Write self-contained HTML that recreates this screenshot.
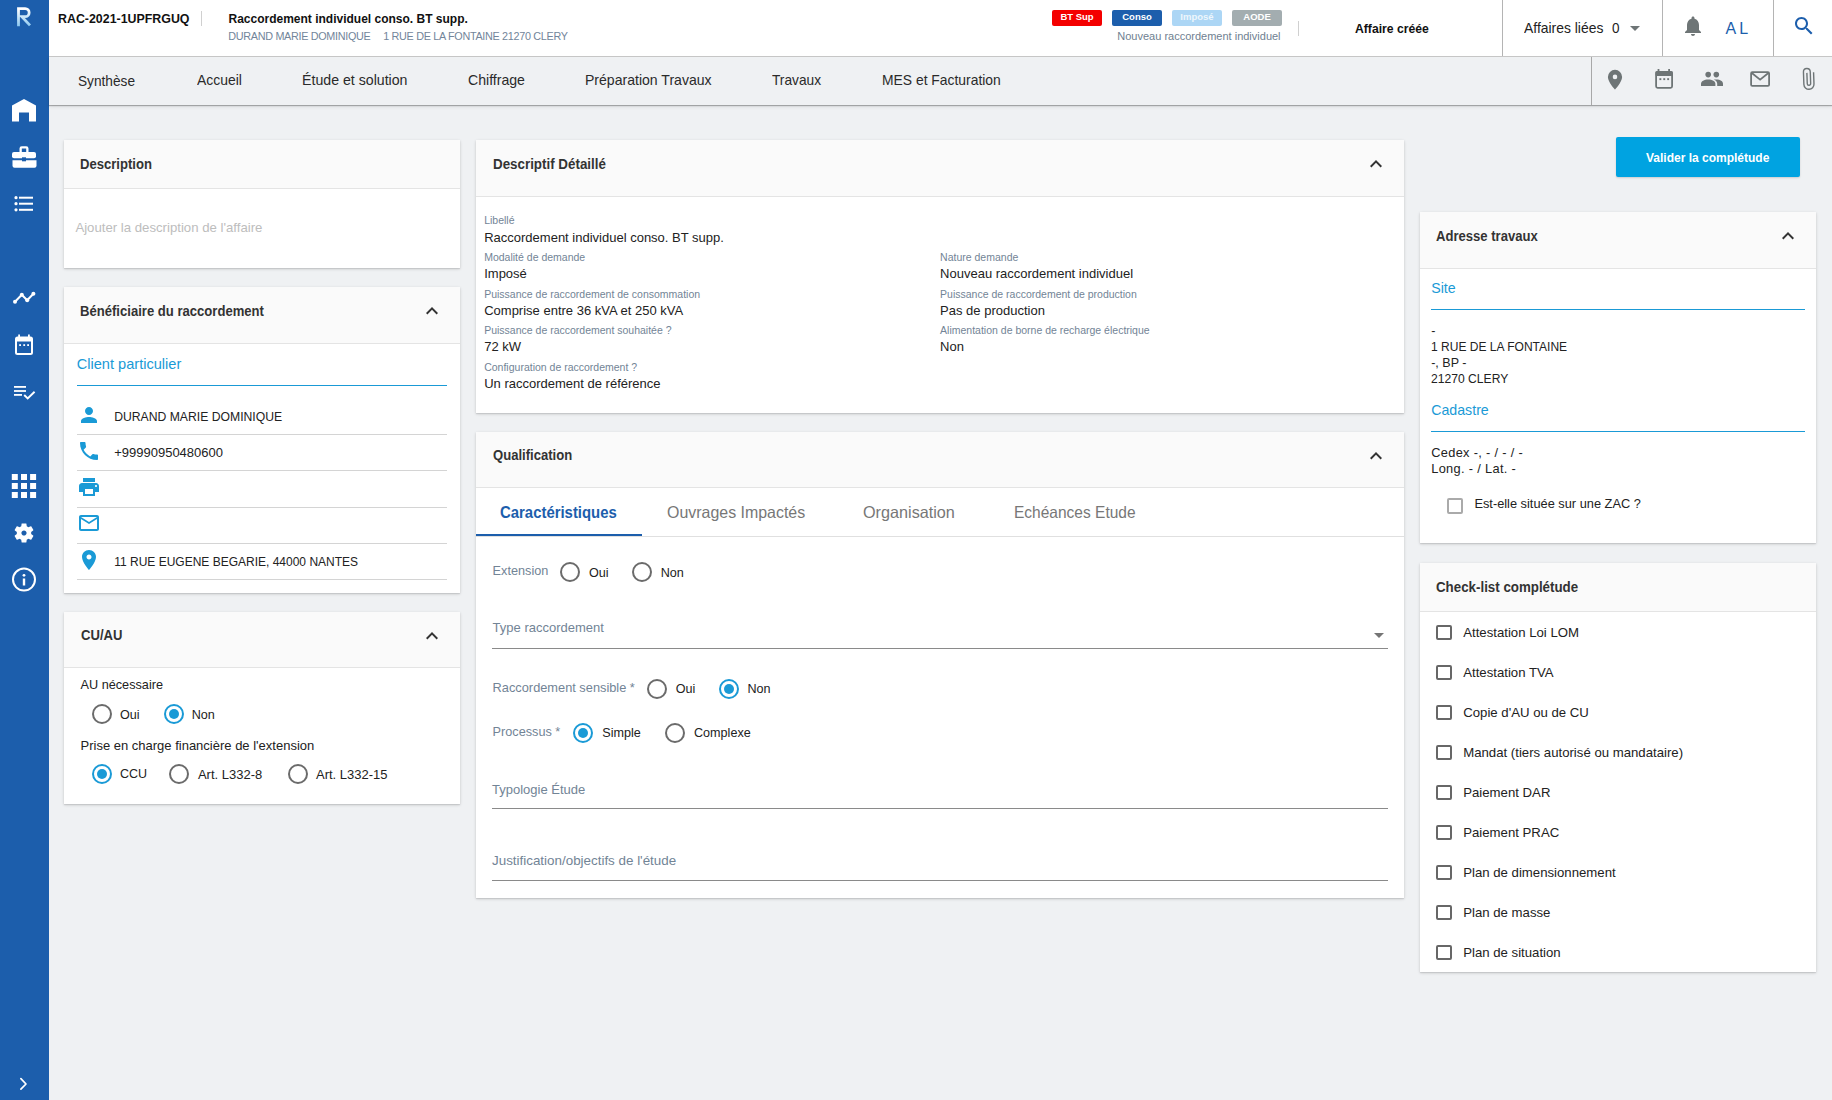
<!DOCTYPE html>
<html><head><meta charset="utf-8">
<style>
html,body{margin:0;padding:0}
body{width:1832px;height:1100px;position:relative;overflow:hidden;background:#eff1f3;font-family:"Liberation Sans",sans-serif;color:#222}
.a{position:absolute}
.t{position:absolute;white-space:nowrap;line-height:1}
.card{position:absolute;background:#fff;box-shadow:0 1px 3px rgba(0,0,0,.16),0 1px 1px rgba(0,0,0,.08)}
.ch{position:absolute;left:0;right:0;top:0;background:#fafafa;border-bottom:1px solid #e4e4e4}
.ct{position:absolute;font-weight:bold;font-size:14.3px;line-height:1;color:#333;white-space:nowrap;transform:scaleX(0.915);transform-origin:0 0}
svg{position:absolute;overflow:visible}
.lb{position:absolute;white-space:nowrap;line-height:1;font-size:10.5px;color:#728496}
.vl{position:absolute;white-space:nowrap;line-height:1;font-size:13px;color:#222}
.rd{position:absolute;width:16px;height:16px;border:2px solid #6b6b6b;border-radius:50%}
.rd.on{border-color:#1a9ad6}
.rd.on::after{content:"";position:absolute;left:3px;top:3px;width:10px;height:10px;border-radius:50%;background:#1a9ad6}
.cb{position:absolute;width:11.6px;height:11.6px;border:2px solid #676767;border-radius:2px}
</style></head><body>

<!-- SIDEBAR -->
<div class="a" style="left:0;top:0;width:49px;height:1100px;background:#1c5eac"></div>
<svg style="left:0;top:0" width="49" height="1100" viewBox="0 0 49 1100">
  <!-- R logo -->
  <defs><linearGradient id="rg" x1="0" y1="0" x2="0" y2="1"><stop offset="0" stop-color="#ffffff"/><stop offset="1" stop-color="#8cc8f0"/></linearGradient></defs>
  <path d="M18.5 26.2V8.7H25.2A3.95 3.95 0 0 1 25.2 16.6H21.8L30 25.4" fill="none" stroke="url(#rg)" stroke-width="2.8" stroke-linejoin="miter"/>
  <!-- home -->
  <path d="M12 105.5L24 99 36 105.5V121.5H29V112.5H19V121.5H12Z" fill="#fff"/>
  <!-- briefcase -->
  <path d="M19.5 152V148.5Q19.5 146.2 21.8 146.2H26.2Q28.5 146.2 28.5 148.5V152H26.2V148.5H21.8V152Z" fill="#fff"/>
  <rect x="12" y="152" width="24" height="6.3" rx="2" fill="#fff"/>
  <path d="M13 160.3H36V165.8Q36 167.8 34 167.8H14Q12 167.8 12 165.8V160.3Z" fill="#fff" transform="translate(0.5 0)"/>
  <rect x="22" y="157.3" width="4" height="4" fill="#1c5eac"/>
  <!-- list -->
  <circle cx="16" cy="197.7" r="1.6" fill="#fff"/><circle cx="16" cy="203.7" r="1.6" fill="#fff"/><circle cx="16" cy="209.8" r="1.6" fill="#fff"/>
  <rect x="19" y="196.7" width="14" height="2" fill="#fff"/><rect x="19" y="202.7" width="14" height="2" fill="#fff"/><rect x="19" y="208.8" width="14" height="2" fill="#fff"/>
  <!-- chart -->
  <polyline points="15,301.8 21.8,294.8 27.2,300.3 33.4,293.8" fill="none" stroke="#fff" stroke-width="2"/>
  <circle cx="15" cy="301.8" r="2" fill="#fff"/><circle cx="21.8" cy="294.8" r="2" fill="#fff"/><circle cx="27.2" cy="300.3" r="2" fill="#fff"/><circle cx="33.4" cy="293.8" r="2" fill="#fff"/>
  <!-- calendar -->
  <rect x="16" y="337.5" width="16" height="16.5" rx="1.5" fill="none" stroke="#fff" stroke-width="2"/>
  <rect x="16" y="337.5" width="16" height="4" fill="#fff"/>
  <rect x="18.2" y="334.5" width="1.8" height="3" fill="#fff"/><rect x="28" y="334.5" width="1.8" height="3" fill="#fff"/>
  <rect x="19.2" y="344.2" width="1.8" height="1.8" fill="#fff"/><rect x="23.3" y="344.2" width="1.8" height="1.8" fill="#fff"/><rect x="27.2" y="344.2" width="1.8" height="1.8" fill="#fff"/>
  <!-- playlist check -->
  <rect x="14" y="386" width="12" height="1.8" fill="#fff"/><rect x="14" y="390.1" width="12" height="1.8" fill="#fff"/><rect x="14" y="394" width="8" height="1.8" fill="#fff"/>
  <polyline points="24.2,395 27.7,398.5 34.6,391.8" fill="none" stroke="#fff" stroke-width="1.9"/>
  <!-- apps -->
  <g fill="#fff">
  <rect x="11.8" y="474" width="6" height="6"/><rect x="21" y="474" width="6" height="6"/><rect x="30.1" y="474" width="6" height="6"/>
  <rect x="11.8" y="483" width="6" height="6"/><rect x="21" y="483" width="6" height="6"/><rect x="30.1" y="483" width="6" height="6"/>
  <rect x="11.8" y="492" width="6" height="6"/><rect x="21" y="492" width="6" height="6"/><rect x="30.1" y="492" width="6" height="6"/>
  </g>
  <!-- settings -->
  <path transform="translate(12 521) scale(1)" fill="#fff" d="M19.14 12.94c.04-.3.06-.61.06-.94 0-.32-.02-.64-.07-.94l2.03-1.58c.18-.14.23-.41.12-.61l-1.920-3.32c-.12-.22-.37-.29-.59-.22l-2.39.96c-.5-.38-1.03-.7-1.62-.94l-.36-2.54c-.04-.24-.24-.41-.48-.41h-3.84c-.24 0-.43.17-.47.41l-.36 2.54c-.59.24-1.13.57-1.62.94l-2.39-.96c-.22-.08-.47 0-.59.22L2.74 8.87c-.12.21-.08.47.12.61l2.03 1.58c-.05.3-.09.63-.09.94s.02.64.07.94l-2.030 1.58c-.18.14-.23.41-.12.61l1.92 3.32c.12.22.37.29.59.22l2.39-.96c.5.38 1.03.7 1.62.94l.36 2.54c.05.24.24.41.48.41h3.84c.24 0 .44-.17.47-.41l.36-2.54c.59-.24 1.13-.56 1.62-.94l2.39.96c.22.08.47 0 .59-.22l1.92-3.32c.12-.22.07-.47-.12-.61l-2.01-1.58zM12 14.6c-1.43 0-2.6-1.17-2.6-2.6s1.17-2.6 2.6-2.6 2.6 1.17 2.6 2.6-1.17 2.6-2.6 2.6z"/>
  <!-- info -->
  <circle cx="24" cy="579.6" r="11" fill="none" stroke="#fff" stroke-width="2"/>
  <circle cx="24" cy="575.3" r="1.4" fill="#fff"/>
  <rect x="22.8" y="578.5" width="2.4" height="7" fill="#fff"/>
  <!-- chevron -->
  <path d="M20.9 1078.7L26 1084 20.9 1089.1" fill="none" stroke="#fff" stroke-width="1.7" stroke-linecap="round" stroke-linejoin="round"/>
</svg>

<!-- HEADER -->
<div class="a" style="left:49px;top:0;width:1783px;height:56px;background:#fff;border-bottom:1px solid #c8c8c8"></div>
<div class="t" style="left:58px;top:12.5px;font-size:12.4px;font-weight:bold;color:#111">RAC-2021-1UPFRGUQ</div>
<div class="a" style="left:201px;top:11px;width:1px;height:15px;background:#d0d0d0"></div>
<div class="t" style="left:228.5px;top:12.8px;font-size:12px;font-weight:bold;color:#111">Raccordement individuel conso. BT supp.</div>
<div class="t" style="left:228.3px;top:31px;font-size:10.8px;letter-spacing:-0.3px;color:#72859a">DURAND MARIE DOMINIQUE</div>
<div class="t" style="left:383.2px;top:31px;font-size:10.8px;letter-spacing:-0.3px;color:#72859a">1 RUE DE LA FONTAINE 21270 CLERY</div>

<div class="a" style="left:1052px;top:10px;width:50px;height:16px;background:#f40000;border-radius:2px"></div>
<div class="a" style="left:1112px;top:10px;width:50px;height:16px;background:#1c5eac;border-radius:2px"></div>
<div class="a" style="left:1172px;top:10px;width:50px;height:16px;background:#acd6f5;border-radius:2px"></div>
<div class="a" style="left:1232px;top:10px;width:50px;height:16px;background:#a3adb0;border-radius:2px"></div>
<div class="t" style="left:1052px;top:11.8px;width:50px;text-align:center;font-size:9.5px;font-weight:bold;color:#fff">BT Sup</div>
<div class="t" style="left:1112px;top:11.8px;width:50px;text-align:center;font-size:9.5px;font-weight:bold;color:#fff">Conso</div>
<div class="t" style="left:1172px;top:11.8px;width:50px;text-align:center;font-size:9.5px;font-weight:bold;color:#eef6fc">Imposé</div>
<div class="t" style="left:1232px;top:11.8px;width:50px;text-align:center;font-size:9.5px;font-weight:bold;color:#fff">AODE</div>
<div class="t" style="left:1117.3px;top:30.8px;font-size:11px;color:#6f8191">Nouveau raccordement individuel</div>
<div class="a" style="left:1298px;top:21px;width:1px;height:15px;background:#d0d0d0"></div>

<div class="t" style="left:1355px;top:22.5px;font-size:12.2px;font-weight:bold;color:#111">Affaire créée</div>
<div class="a" style="left:1502px;top:0;width:1px;height:56px;background:#b4b4b4"></div>
<div class="t" style="left:1523.5px;top:20px;font-size:15px;color:#222;transform:scaleX(0.927);transform-origin:0 0">Affaires liées</div>
<div class="t" style="left:1612px;top:20px;font-size:15px;color:#222;transform:scaleX(0.9);transform-origin:0 0">0</div>
<svg style="left:1630px;top:26px" width="10" height="5"><path d="M0 0H10L5 5Z" fill="#6e7576"/></svg>
<div class="a" style="left:1662px;top:0;width:1px;height:56px;background:#b4b4b4"></div>
<svg style="left:1681px;top:13.7px" width="24" height="24" viewBox="0 0 24 24"><path fill="#6e7576" d="M12 22c1.1 0 2-.9 2-2h-4c0 1.1.89 2 2 2zm6-6v-5c0-3.07-1.64-5.64-4.5-6.32V4c0-.83-.67-1.5-1.5-1.5s-1.5.67-1.5 1.5v.68C7.63 5.36 6 7.92 6 11v5l-2 2v1h16v-1l-2-2z"/></svg>
<div class="t" style="left:1725.5px;top:21px;font-size:16px;color:#1c5eac;letter-spacing:3px">AL</div>
<div class="a" style="left:1773px;top:0;width:1px;height:56px;background:#b4b4b4"></div>
<svg style="left:1792px;top:13.8px" width="24" height="24" viewBox="0 0 24 24"><path fill="#1c5eac" d="M15.5 14h-.79l-.28-.27C15.41 12.59 16 11.11 16 9.5 16 5.91 13.090 3 9.5 3S3 5.91 3 9.5 5.91 16 9.5 16c1.61 0 3.09-.59 4.23-1.57l.27.28v.79l5 4.99L20.49 19l-4.99-5zm-6 0C7.01 14 5 11.99 5 9.5S7.01 5 9.5 5 14 7.01 14 9.5 11.99 14 9.5 14z"/></svg>

<!-- NAV -->
<div class="a" style="left:49px;top:57px;width:1783px;height:48px;background:#eff1f3;box-shadow:0 1px 1px rgba(0,0,0,.28),0 2px 4px rgba(0,0,0,.08)"></div>
<div class="t" style="left:78.3px;top:73.2px;font-size:15px;color:#2a2a2a;transform:scaleX(0.911);transform-origin:0 0">Synthèse</div>
<div class="t" style="left:196.5px;top:72.3px;font-size:15px;color:#2a2a2a;transform:scaleX(0.93);transform-origin:0 0">Accueil</div>
<div class="t" style="left:302px;top:72.3px;font-size:15px;color:#2a2a2a;transform:scaleX(0.944);transform-origin:0 0">Étude et solution</div>
<div class="t" style="left:467.7px;top:72.3px;font-size:15px;color:#2a2a2a;transform:scaleX(0.94);transform-origin:0 0">Chiffrage</div>
<div class="t" style="left:585.1px;top:72.3px;font-size:15px;color:#2a2a2a;transform:scaleX(0.937);transform-origin:0 0">Préparation Travaux</div>
<div class="t" style="left:772.4px;top:72.3px;font-size:15px;color:#2a2a2a;transform:scaleX(0.914);transform-origin:0 0">Travaux</div>
<div class="t" style="left:882.3px;top:72.3px;font-size:15px;color:#2a2a2a;transform:scaleX(0.925);transform-origin:0 0">MES et Facturation</div>
<div class="a" style="left:1591px;top:57px;width:1px;height:48px;background:#a8a8a8"></div>
<svg style="left:1595px;top:60px" width="237" height="40" viewBox="0 0 237 40">
  <path d="M20 29.5C20 29.5 12.9 21.8 12.9 16.9A7.1 7.1 0 0 1 27.1 16.9C27.1 21.8 20 29.5 20 29.5ZM20 14.6A2.3 2.3 0 1 0 20 19.2A2.3 2.3 0 1 0 20 14.6Z" fill="#6e7576" fill-rule="evenodd"/>
  <rect x="61.1" y="11.9" width="16" height="15.9" rx="1.5" fill="none" stroke="#6e7576" stroke-width="1.8"/>
  <rect x="60.5" y="11.2" width="17.2" height="4.9" rx="1" fill="#6e7576"/>
  <rect x="62.6" y="9" width="1.8" height="3" fill="#6e7576"/><rect x="73.2" y="9" width="1.8" height="3" fill="#6e7576"/>
  <rect x="64.4" y="18.2" width="1.9" height="1.9" fill="#6e7576"/><rect x="68.3" y="18.2" width="1.9" height="1.9" fill="#6e7576"/><rect x="72.2" y="18.2" width="1.9" height="1.9" fill="#6e7576"/>
  <circle cx="113.2" cy="14.6" r="2.8" fill="#6e7576"/><circle cx="121.3" cy="14.6" r="2.8" fill="#6e7576"/>
  <path d="M106 25.9V23.8C106 21 109.2 19.4 113.2 19.4S120.4 21 120.4 23.8V25.9Z" fill="#6e7576"/>
  <path d="M118.6 19.6C119.4 19.45 120.3 19.4 121.3 19.4C125.3 19.4 128 21 128 23.8V25.9H122.2V23.8C122.2 22 121 20.6 118.6 19.6Z" fill="#6e7576"/>
  <rect x="156.1" y="12.2" width="18" height="13.7" rx="1.2" fill="none" stroke="#6e7576" stroke-width="1.8"/>
  <path d="M156.5 12.8L165.1 19.6L173.7 12.8" fill="none" stroke="#6e7576" stroke-width="1.8"/>
  <path d="M217.6 12.5V24.2A5.05 5.05 0 0 1 207.5 24.2V11.8A3.4 3.4 0 0 1 214.3 11.8V23.6A1.7 1.7 0 0 1 210.9 23.6V12.8" fill="none" stroke="#6e7576" stroke-width="1.4" transform="translate(1.2 0) rotate(-2 213 19)"/>
</svg>


<!-- LEFT COLUMN -->
<div class="card" style="left:64px;top:140px;width:396px;height:128px"><div class="ch" style="height:48px"></div></div>
<div class="ct" style="left:80px;top:157.2px">Description</div>
<div class="t" style="left:75.4px;top:220.8px;font-size:13.2px;color:#bdbdbd">Ajouter la description de l'affaire</div>

<div class="card" style="left:64px;top:287px;width:396px;height:306px"><div class="ch" style="height:56px"></div></div>
<div class="ct" style="left:79.8px;top:303.8px">Bénéficiaire du raccordement</div>
<svg style="left:420px;top:299px" width="24" height="24" viewBox="0 0 24 24"><path fill="#333" d="M12 8l-6 6 1.41 1.41L12 10.83l4.59 4.58L18 14z"/></svg>
<div class="t" style="left:76.7px;top:357px;font-size:14.6px;color:#1a9ad6">Client particulier</div>
<div class="a" style="left:77px;top:385px;width:370px;height:1px;background:#1a9ad6"></div>
<svg style="left:77px;top:403px" width="24" height="24" viewBox="0 0 24 24"><path fill="#1a9ad6" d="M12 12c2.21 0 4-1.79 4-4s-1.79-4-4-4-4 1.79-4 4 1.79 4 4 4zm0 2c-2.67 0-8 1.34-8 4v2h16v-2c0-2.66-5.330-4-8-4z"/></svg>
<div class="t" style="left:114.2px;top:411px;font-size:12.2px;color:#222">DURAND MARIE DOMINIQUE</div>
<div class="a" style="left:77px;top:434px;width:370px;height:1px;background:#d4d4d4"></div>
<svg style="left:77px;top:439px" width="24" height="24" viewBox="0 0 24 24"><path fill="#1a9ad6" d="M6.62 10.79c1.44 2.83 3.76 5.14 6.59 6.59l2.2-2.2c.27-.27.67-.36 1.02-.24 1.12.37 2.33.57 3.57.57.55 0 1 .45 1 1V20c0 .55-.45 1-1 1-9.39 0-17-7.61-17-17 0-.55.45-1 1-1h3.5c.55 0 1 .45 1 1 0 1.25.2 2.45.57 3.57.11.35.03.74-.25 1.02l-2.2 2.2z"/></svg>
<div class="t" style="left:114.2px;top:446.2px;font-size:13px;color:#222">+99990950480600</div>
<div class="a" style="left:77px;top:470px;width:370px;height:1px;background:#d4d4d4"></div>
<svg style="left:77px;top:475px" width="24" height="24" viewBox="0 0 24 24"><path fill="#1a9ad6" d="M19 8H5c-1.66 0-3 1.34-3 3v6h4v4h12v-4h4v-6c0-1.66-1.34-3-3-3zm-3 11H8v-5h8v5zm3-7c-.55 0-1-.45-1-1s.45-1 1-1 1 .45 1 1-.45 1-1 1zm-1-9H6v4h12V3z"/></svg>
<div class="a" style="left:77px;top:507px;width:370px;height:1px;background:#d4d4d4"></div>
<svg style="left:77px;top:511px" width="24" height="24" viewBox="0 0 24 24"><path fill="#1a9ad6" d="M20 4H4c-1.1 0-1.99.9-1.99 2L2 18c0 1.1.9 2 2 2h16c1.1 0 2-.9 2-2V6c0-1.1-.9-2-2-2zm0 14H4V8l8 5 8-5v10zm-8-7L4 6h16l-8 5z"/></svg>
<div class="a" style="left:77px;top:543px;width:370px;height:1px;background:#d4d4d4"></div>
<svg style="left:77px;top:548px" width="24" height="24" viewBox="0 0 24 24"><path fill="#1a9ad6" d="M12 2C8.13 2 5 5.13 5 9c0 5.25 7 13 7 13s7-7.75 7-13c0-3.87-3.13-7-7-7zm0 9.5c-1.38 0-2.5-1.12-2.5-2.5s1.12-2.5 2.5-2.5 2.5 1.12 2.5 2.5-1.12 2.5-2.5 2.5z"/></svg>
<div class="t" style="left:114.2px;top:556.3px;font-size:12px;color:#222">11 RUE EUGENE BEGARIE, 44000 NANTES</div>
<div class="a" style="left:77px;top:579px;width:370px;height:1px;background:#d4d4d4"></div>

<div class="card" style="left:64px;top:612px;width:396px;height:192px"><div class="ch" style="height:55px"></div></div>
<div class="ct" style="left:80.5px;top:627.5px">CU/AU</div>
<svg style="left:420px;top:624px" width="24" height="24" viewBox="0 0 24 24"><path fill="#333" d="M12 8l-6 6 1.41 1.41L12 10.83l4.59 4.58L18 14z"/></svg>
<div class="t" style="left:80.5px;top:678.6px;font-size:12.7px;color:#222">AU nécessaire</div>
<div class="rd" style="left:91.8px;top:704px"></div>
<div class="t" style="left:119.9px;top:708.5px;font-size:12.6px;color:#222">Oui</div>
<div class="rd on" style="left:163.8px;top:704px"></div>
<div class="t" style="left:191.7px;top:708.5px;font-size:12.6px;color:#222">Non</div>
<div class="t" style="left:80.5px;top:738.5px;font-size:13px;color:#222">Prise en charge financière de l'extension</div>
<div class="rd on" style="left:91.8px;top:764px"></div>
<div class="t" style="left:119.9px;top:768.3px;font-size:12.5px;color:#222">CCU</div>
<div class="rd" style="left:168.8px;top:764px"></div>
<div class="t" style="left:197.9px;top:767.8px;font-size:13px;color:#222">Art. L332-8</div>
<div class="rd" style="left:287.8px;top:764px"></div>
<div class="t" style="left:316px;top:767.8px;font-size:13px;color:#222">Art. L332-15</div>

<!-- CENTER COLUMN -->
<div class="card" style="left:476px;top:140px;width:928px;height:273px"><div class="ch" style="height:56px"></div></div>
<div class="ct" style="left:492.8px;top:156.9px;transform:scaleX(0.935)">Descriptif Détaillé</div>
<svg style="left:1364px;top:152px" width="24" height="24" viewBox="0 0 24 24"><path fill="#333" d="M12 8l-6 6 1.41 1.41L12 10.83l4.59 4.58L18 14z"/></svg>
<div class="lb" style="left:484.2px;top:215.2px">Libellé</div>
<div class="vl" style="left:484.2px;top:230.8px">Raccordement individuel conso. BT supp.</div>
<div class="lb" style="left:484.2px;top:252.3px">Modalité de demande</div>
<div class="vl" style="left:484.2px;top:267.1px">Imposé</div>
<div class="lb" style="left:484.2px;top:289px">Puissance de raccordement de consommation</div>
<div class="vl" style="left:484.2px;top:304.3px">Comprise entre 36 kVA et 250 kVA</div>
<div class="lb" style="left:484.2px;top:324.8px">Puissance de raccordement souhaitée ?</div>
<div class="vl" style="left:484.2px;top:339.9px">72 kW</div>
<div class="lb" style="left:484.2px;top:362px">Configuration de raccordement ?</div>
<div class="vl" style="left:484.2px;top:376.8px">Un raccordement de référence</div>
<div class="lb" style="left:940.1px;top:252.3px">Nature demande</div>
<div class="vl" style="left:940.1px;top:267.1px">Nouveau raccordement individuel</div>
<div class="lb" style="left:940.1px;top:289px">Puissance de raccordement de production</div>
<div class="vl" style="left:940.1px;top:304.3px">Pas de production</div>
<div class="lb" style="left:940.1px;top:324.8px">Alimentation de borne de recharge électrique</div>
<div class="vl" style="left:940.1px;top:339.9px">Non</div>

<div class="card" style="left:476px;top:432px;width:928px;height:466px"><div class="ch" style="height:55px"></div></div>
<div class="ct" style="left:492.6px;top:447.6px">Qualification</div>
<svg style="left:1364px;top:444px" width="24" height="24" viewBox="0 0 24 24"><path fill="#333" d="M12 8l-6 6 1.41 1.41L12 10.83l4.59 4.58L18 14z"/></svg>
<div class="a" style="left:476px;top:535.5px;width:928px;height:1px;background:#e0e0e0"></div>
<div class="a" style="left:476px;top:534px;width:166px;height:2px;background:#1c5eac"></div>
<div class="t" style="left:500.3px;top:503.8px;font-size:16.5px;font-weight:bold;color:#1c5eac;transform:scaleX(0.903);transform-origin:0 0">Caractéristiques</div>
<div class="t" style="left:666.5px;top:503.8px;font-size:16.5px;color:#777;transform:scaleX(0.966);transform-origin:0 0">Ouvrages Impactés</div>
<div class="t" style="left:863.3px;top:503.8px;font-size:16.5px;color:#777;transform:scaleX(0.982);transform-origin:0 0">Organisation</div>
<div class="t" style="left:1013.5px;top:503.8px;font-size:16.5px;color:#777;transform:scaleX(0.94);transform-origin:0 0">Echéances Etude</div>

<div class="t" style="left:492.6px;top:564.6px;font-size:12.7px;color:#728496">Extension</div>
<div class="rd" style="left:559.8px;top:562px"></div>
<div class="t" style="left:589px;top:567.2px;font-size:12.6px;color:#222">Oui</div>
<div class="rd" style="left:631.8px;top:562px"></div>
<div class="t" style="left:660.7px;top:567.2px;font-size:12.6px;color:#222">Non</div>

<div class="t" style="left:492.6px;top:621.3px;font-size:13px;color:#728496">Type raccordement</div>
<svg style="left:1374px;top:632.5px" width="10" height="5"><path d="M0 0H10L5 5Z" fill="#757575"/></svg>
<div class="a" style="left:492px;top:647.5px;width:896px;height:1px;background:#8a8a8a"></div>

<div class="t" style="left:492.6px;top:681.8px;font-size:12.8px;color:#728496">Raccordement sensible *</div>
<div class="rd" style="left:646.6px;top:679px"></div>
<div class="t" style="left:675.8px;top:683px;font-size:12.6px;color:#222">Oui</div>
<div class="rd on" style="left:719px;top:679px"></div>
<div class="t" style="left:747.5px;top:683px;font-size:12.6px;color:#222">Non</div>

<div class="t" style="left:492.6px;top:725.9px;font-size:12.7px;color:#728496">Processus *</div>
<div class="rd on" style="left:572.8px;top:722.8px"></div>
<div class="t" style="left:602.3px;top:727px;font-size:12.6px;color:#222">Simple</div>
<div class="rd" style="left:664.6px;top:722.8px"></div>
<div class="t" style="left:694px;top:727px;font-size:12.6px;color:#222">Complexe</div>

<div class="t" style="left:492px;top:782.9px;font-size:13px;color:#728496">Typologie Étude</div>
<div class="a" style="left:492px;top:808px;width:896px;height:1px;background:#8a8a8a"></div>
<div class="t" style="left:492px;top:853.9px;font-size:13.4px;color:#728496">Justification/objectifs de l'étude</div>
<div class="a" style="left:492px;top:880px;width:896px;height:1px;background:#8a8a8a"></div>

<!-- RIGHT COLUMN -->
<div class="a" style="left:1616px;top:137px;width:184px;height:40px;background:#00a3e1;border-radius:2px;box-shadow:0 1px 2px rgba(0,0,0,.15)"></div>
<div class="t" style="left:1646px;top:151.8px;font-size:12px;font-weight:bold;color:#fff">Valider la complétude</div>

<div class="card" style="left:1420px;top:212px;width:396px;height:331px"><div class="ch" style="height:56px"></div></div>
<div class="ct" style="left:1436px;top:228.6px">Adresse travaux</div>
<svg style="left:1776px;top:224px" width="24" height="24" viewBox="0 0 24 24"><path fill="#333" d="M12 8l-6 6 1.41 1.41L12 10.83l4.59 4.58L18 14z"/></svg>
<div class="t" style="left:1431.2px;top:280.7px;font-size:14.2px;color:#1a9ad6">Site</div>
<div class="a" style="left:1431px;top:309px;width:374px;height:1px;background:#1a9ad6"></div>
<div class="t" style="left:1431.2px;top:324.6px;font-size:12.5px;color:#222">-</div>
<div class="t" style="left:1431.2px;top:340.6px;font-size:12.5px;color:#222;transform:scaleX(0.962);transform-origin:0 0">1 RUE DE LA FONTAINE</div>
<div class="t" style="left:1431.2px;top:356.6px;font-size:12.5px;color:#222">-, BP -</div>
<div class="t" style="left:1431.2px;top:372.6px;font-size:12.5px;color:#222;transform:scaleX(0.97);transform-origin:0 0">21270 CLERY</div>
<div class="t" style="left:1431.2px;top:403.1px;font-size:14.2px;color:#1a9ad6">Cadastre</div>
<div class="a" style="left:1431px;top:431px;width:374px;height:1px;background:#1a9ad6"></div>
<div class="t" style="left:1431.2px;top:447px;font-size:12.8px;color:#222;letter-spacing:0.33px">Cedex -, - / - / -</div>
<div class="t" style="left:1431.2px;top:463px;font-size:12.8px;color:#222;letter-spacing:0.33px">Long. - / Lat. -</div>
<div class="cb" style="left:1447px;top:498px;border-color:#aaa"></div>
<div class="t" style="left:1474.4px;top:497.9px;font-size:12.8px;color:#222">Est-elle située sur une ZAC ?</div>

<div class="card" style="left:1420px;top:563px;width:396px;height:409px"><div class="ch" style="height:48px"></div></div>
<div class="ct" style="left:1436px;top:580.2px;transform:scaleX(0.932)">Check-list complétude</div>
<div class="cb" style="left:1436px;top:624.8px"></div>
<div class="t" style="left:1463.2px;top:626px;font-size:13.2px;color:#222">Attestation Loi LOM</div>
<div class="cb" style="left:1436px;top:664.8px"></div>
<div class="t" style="left:1463.2px;top:666px;font-size:13.2px;color:#222">Attestation TVA</div>
<div class="cb" style="left:1436px;top:704.8px"></div>
<div class="t" style="left:1463.2px;top:706px;font-size:13.2px;color:#222">Copie d'AU ou de CU</div>
<div class="cb" style="left:1436px;top:744.8px"></div>
<div class="t" style="left:1463.2px;top:746px;font-size:13.2px;color:#222">Mandat (tiers autorisé ou mandataire)</div>
<div class="cb" style="left:1436px;top:784.8px"></div>
<div class="t" style="left:1463.2px;top:786px;font-size:13.2px;color:#222">Paiement DAR</div>
<div class="cb" style="left:1436px;top:824.8px"></div>
<div class="t" style="left:1463.2px;top:826px;font-size:13.2px;color:#222">Paiement PRAC</div>
<div class="cb" style="left:1436px;top:864.8px"></div>
<div class="t" style="left:1463.2px;top:866px;font-size:13.2px;color:#222">Plan de dimensionnement</div>
<div class="cb" style="left:1436px;top:904.8px"></div>
<div class="t" style="left:1463.2px;top:906px;font-size:13.2px;color:#222">Plan de masse</div>
<div class="cb" style="left:1436px;top:944.8px"></div>
<div class="t" style="left:1463.2px;top:946px;font-size:13.2px;color:#222">Plan de situation</div>


</body></html>
